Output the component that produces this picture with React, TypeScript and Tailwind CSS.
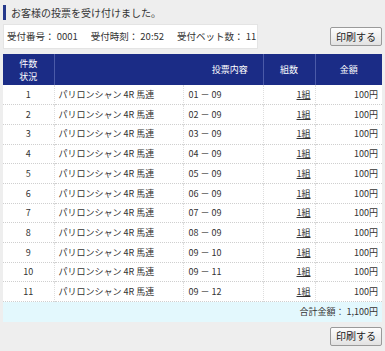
import React from "react";

const rows = [
  "01 － 09",
  "02 － 09",
  "03 － 09",
  "04 － 09",
  "05 － 09",
  "06 － 09",
  "07 － 09",
  "08 － 09",
  "09 － 10",
  "09 － 11",
  "09 － 12",
];

function PrintButton() {
  return (
    <button className="w-[52px] h-[19px] rounded-[2px] border border-[#9a9a9a] bg-gradient-to-b from-[#fdfdfd] to-[#e2e2e2] text-[10px] text-[#222] leading-none">
      印刷する
    </button>
  );
}

export default function App() {
  return (
    <div
      className="w-[385px] h-[351px] bg-[#eeeeee] px-[3px] pt-[5px] text-[9px] text-[#333]"
      style={{ fontFamily: '"Noto Sans CJK JP", "Noto Sans", sans-serif' }}
    >
      {/* タイトル */}
      <div className="flex items-center h-[15px] border-l-[3px] border-[#26398c] pl-[5px] text-[10px] text-[#333]">
        お客様の投票を受け付けました。
      </div>

      {/* 受付情報 */}
      <div className="mt-[4px] flex items-center justify-between">
        <div className="w-[255px] h-[25px] bg-white border border-[#e4e4e4] flex items-center pl-[3px] gap-[13px] text-[9.5px] whitespace-nowrap">
          <span>受付番号： 0001</span>
          <span>受付時刻： 20:52</span>
          <span>受付ベット数： 11</span>
        </div>
        <PrintButton />
      </div>

      {/* 投票一覧 */}
      <table className="mt-[5px] w-[379px] border-collapse table-fixed">
        <colgroup>
          <col className="w-[51px]" />
          <col className="w-[129px]" />
          <col className="w-[80px]" />
          <col className="w-[52px]" />
          <col className="w-[67px]" />
        </colgroup>
        <thead>
          <tr className="h-[31px] bg-[#1b2c86] text-white">
            <th className="font-normal leading-[13px] border-r border-[#4b5aa8]">
              件数
              <br />
              状況
            </th>
            <th className="font-normal" />
            <th className="font-normal text-center pl-[14px] border-r border-[#4b5aa8]">投票内容</th>
            <th className="font-normal text-center border-r border-[#4b5aa8]">組数</th>
            <th className="font-normal text-center">金額</th>
          </tr>
        </thead>
        <tbody className="bg-white">
          {rows.map((r, i) => (
            <tr key={i} className="h-[19.7px] border-b border-dotted border-[#cfcfcf]">
              <td className="text-center border-r border-dotted border-[#dedede]">{i + 1}</td>
              <td className="pl-[4px] border-r border-dotted border-[#dedede]">パリロンシャン 4R 馬連</td>
              <td className="pl-[5px] border-r border-dotted border-[#dedede]">{r}</td>
              <td className="text-right pr-[4px] border-r border-dotted border-[#dedede]">
                <span className="underline">1組</span>
              </td>
              <td className="text-right pr-[4px]">100円</td>
            </tr>
          ))}
          <tr className="h-[20px] bg-[#e3f8fd]">
            <td colSpan={5} className="text-right pr-[4px]">
              合計金額： 1,100円
            </td>
          </tr>
        </tbody>
      </table>

      <div className="mt-[5px] flex justify-end">
        <PrintButton />
      </div>
    </div>
  );
}
